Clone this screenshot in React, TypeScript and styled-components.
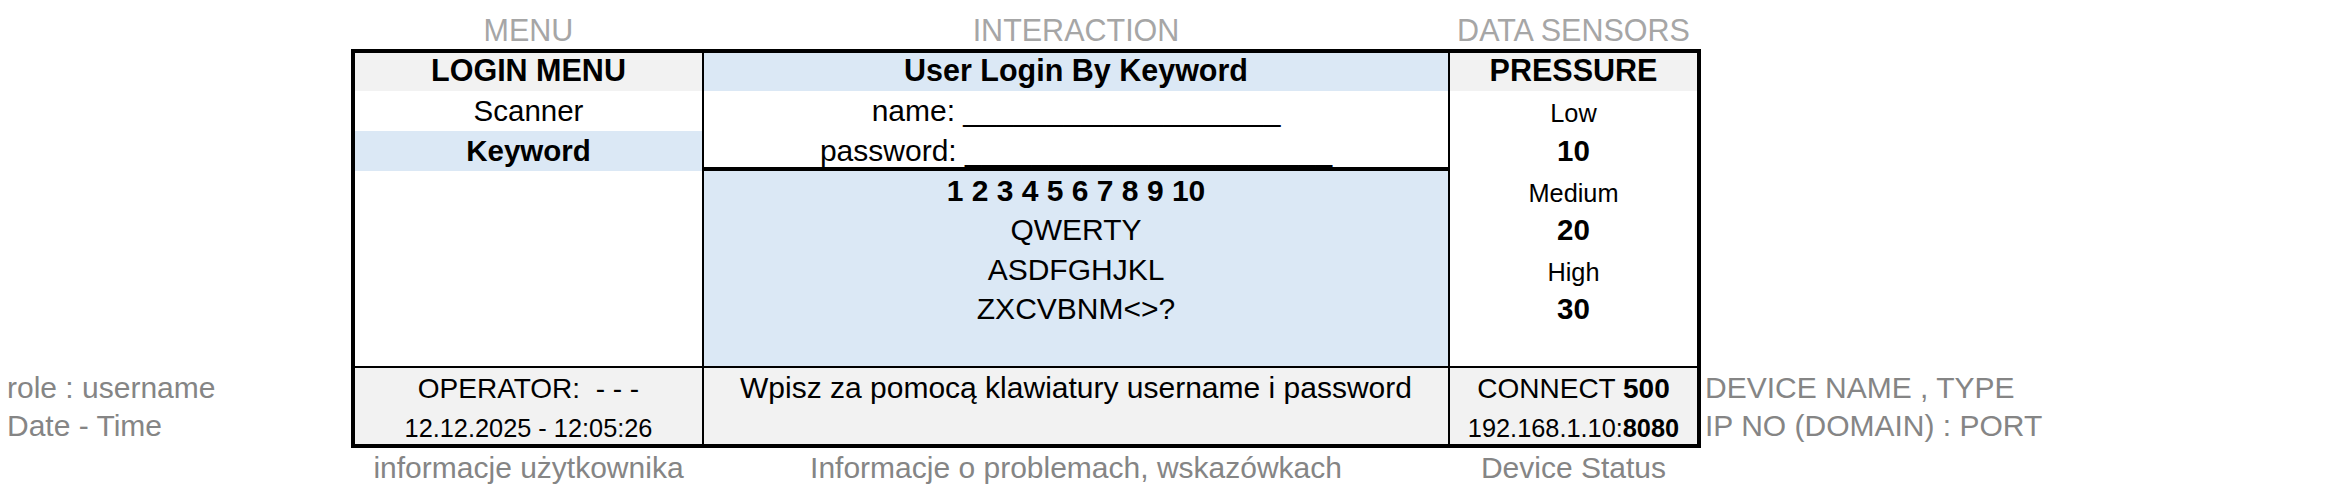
import React from 'react';
import styled, { createGlobalStyle } from 'styled-components';

const GlobalStyle = createGlobalStyle`
  html, body { margin: 0; padding: 0; background: #ffffff; }
  body { font-family: "Liberation Sans", Arial, sans-serif; color: #000; }
`;

const GRAY = '#f2f2f2';
const BLUE = '#dbe8f5';
const COLS = '347px 744px 247px';

const Page = styled.div`
  display: grid;
  grid-template-columns: 351px 1350px 1fr;
  grid-template-rows: 49px 319px 80px 48px;
  width: 2339px;
  height: 496px;
`;

const ColumnLabels = styled.div`
  grid-column: 2;
  grid-row: 1;
  display: grid;
  grid-template-columns: ${COLS};
  column-gap: 2px;
  padding: 0 4px;
`;

const TopLabel = styled.div`
  display: flex;
  align-items: flex-end;
  justify-content: center;
  padding-bottom: 1px;
  font-size: 30.5px;
  color: #a6a6a6;
  white-space: nowrap;
`;

const TableBody = styled.div`
  grid-column: 2;
  grid-row: 2;
  display: grid;
  grid-template-columns: ${COLS};
  grid-template-rows: 1fr;
  column-gap: 2px;
  background: #000;
  border: 4px solid #000;
  border-bottom-width: 2px;
`;

const TableFooter = styled(TableBody)`
  grid-row: 3;
  border-top-width: 0;
  border-bottom-width: 4px;
`;

const Column = styled.div<{ $bg?: string }>`
  display: flex;
  flex-direction: column;
  background: ${(p) => p.$bg ?? '#fff'};
`;

const Row = styled.div<{ $h?: number; $bg?: string; $size?: number; $bold?: boolean; $pb?: number; $lh?: string }>`
  flex: none;
  box-sizing: border-box;
  display: flex;
  align-items: flex-end;
  justify-content: center;
  height: ${(p) => p.$h ?? 40}px;
  padding-bottom: ${(p) => p.$pb ?? 3}px;
  background: ${(p) => p.$bg ?? 'transparent'};
  font-size: ${(p) => p.$size ?? 29.5}px;
  font-weight: ${(p) => (p.$bold ? 700 : 400)};
  line-height: ${(p) => p.$lh ?? 'normal'};
  white-space: pre;
`;

const HeaderCell = styled(Row).attrs({ $h: 38, $bold: true, $size: 30.5 })``;

const Form = styled.div`
  flex: none;
  height: 80px;
  box-sizing: border-box;
  border-bottom: 4px solid #000;
  display: flex;
  flex-direction: column;
  background: #fff;
`;

const Keypad = styled.div`
  flex: 1;
  display: flex;
  flex-direction: column;
  background: ${BLUE};
`;

const KeyRow = styled(Row).attrs({ $h: 39.5, $size: 30 })``;

const SensorRow = styled(Row)``;

const Filler = styled.div`
  flex: 1;
`;

const FooterCell = styled.div`
  display: flex;
  flex-direction: column;
  background: ${GRAY};
`;

const SideLabels = styled.div<{ $col: number }>`
  grid-column: ${(p) => p.$col};
  grid-row: 3;
  display: flex;
  flex-direction: column;
  padding-left: ${(p) => (p.$col === 1 ? 7 : 4)}px;
  color: #858585;
`;

const SideLine = styled(Row)`
  justify-content: flex-start;
`;

const BottomLabels = styled.div`
  grid-column: 2;
  grid-row: 4;
  display: grid;
  grid-template-columns: ${COLS};
  column-gap: 2px;
  padding: 0 4px;
`;

const BottomLabel = styled.div`
  text-align: center;
  font-size: 30px;
  line-height: 40px;
  color: #858585;
  white-space: nowrap;
`;

const B = styled.b`
  font-weight: 700;
`;

export default function App() {
  return (
    <>
      <GlobalStyle />
      <Page>
        <ColumnLabels>
          <TopLabel>MENU</TopLabel>
          <TopLabel>INTERACTION</TopLabel>
          <TopLabel>DATA SENSORS</TopLabel>
        </ColumnLabels>

        <TableBody>
          <Column>
            <HeaderCell $bg={GRAY}>LOGIN MENU</HeaderCell>
            <Row>Scanner</Row>
            <Row $bg={BLUE} $bold>Keyword</Row>
            <Filler />
          </Column>

          <Column>
            <HeaderCell $bg={BLUE}>User Login By Keyword</HeaderCell>
            <Form>
              <Row $size={30}>{'name: ___________________'}</Row>
              <Row $h={36} $size={30} $pb={1} $lh="1">{'password: ______________________'}</Row>
            </Form>
            <Keypad>
              <KeyRow $bold>1 2 3 4 5 6 7 8 9 10</KeyRow>
              <KeyRow>QWERTY</KeyRow>
              <KeyRow>ASDFGHJKL</KeyRow>
              <KeyRow>{'ZXCVBNM<>?'}</KeyRow>
              <Filler />
            </Keypad>
          </Column>

          <Column>
            <HeaderCell $bg={GRAY}>PRESSURE</HeaderCell>
            <SensorRow $size={25.33}>Low</SensorRow>
            <SensorRow $bold>10</SensorRow>
            <SensorRow $h={39.5} $size={25.33}>Medium</SensorRow>
            <SensorRow $h={39.5} $bold>20</SensorRow>
            <SensorRow $h={39.5} $size={25.33}>High</SensorRow>
            <SensorRow $h={39.5} $bold>30</SensorRow>
            <Filler />
          </Column>
        </TableBody>

        <SideLabels $col={1}>
          <SideLine $size={30}>role : username</SideLine>
          <SideLine $h={36} $size={30} $pb={1.5}>Date - Time</SideLine>
        </SideLabels>

        <TableFooter>
          <FooterCell>
            <Row $size={28}>{'OPERATOR:  - - -'}</Row>
            <Row $h={36} $size={25.33} $pb={1.5}>12.12.2025 - 12:05:26</Row>
          </FooterCell>
          <FooterCell>
            <Row $size={30}>Wpisz za pomocą klawiatury username i password</Row>
            <Row $h={36} />
          </FooterCell>
          <FooterCell>
            <Row $size={28}>
              CONNECT <B>500</B>
            </Row>
            <Row $h={36} $size={25.33} $pb={1.5}>
              192.168.1.10:<B>8080</B>
            </Row>
          </FooterCell>
        </TableFooter>

        <SideLabels $col={3}>
          <SideLine $size={30}>DEVICE NAME , TYPE</SideLine>
          <SideLine $h={36} $size={30} $pb={1.5}>IP NO (DOMAIN) : PORT</SideLine>
        </SideLabels>

        <BottomLabels>
          <BottomLabel>informacje użytkownika</BottomLabel>
          <BottomLabel>Informacje o problemach, wskazówkach</BottomLabel>
          <BottomLabel>Device Status</BottomLabel>
        </BottomLabels>
      </Page>
    </>
  );
}
